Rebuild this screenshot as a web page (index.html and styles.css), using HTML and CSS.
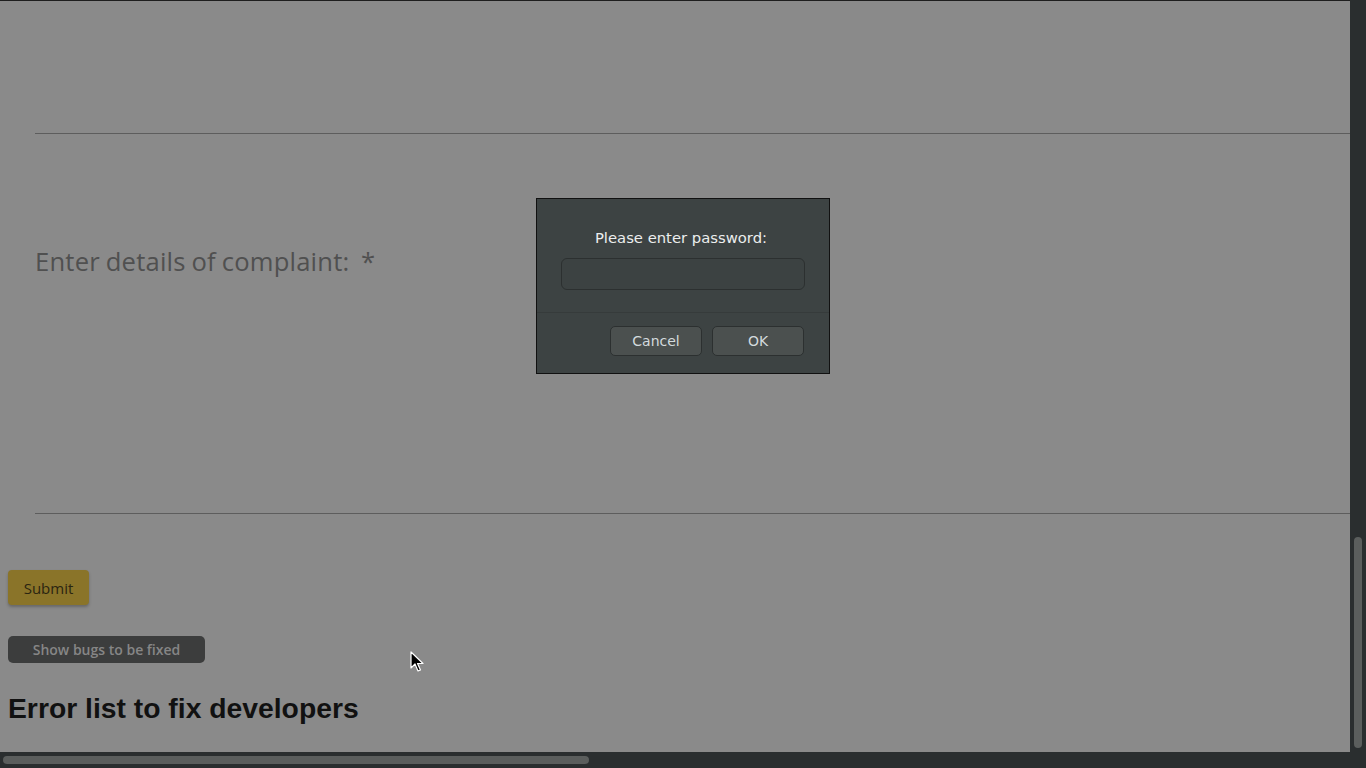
FILE: index.html
```html
<!DOCTYPE html>
<html lang="en">
<head>
<meta charset="utf-8">
<title>Complaint form</title>
<link rel="stylesheet" href="styles.css">
</head>
<body>
<div class="window">
  <div class="viewport">
    <main class="page">
      <div class="top-space"></div>
      <section class="field">
        <label class="field-label">Enter details of complaint:&nbsp; *</label>
      </section>
      <div class="actions">
        <button class="btn-submit" type="button">Submit</button>
        <button class="btn-bugs" type="button">Show bugs to be fixed</button>
      </div>
      <h2 class="errors-title">Error list to fix developers</h2>
    </main>
    <div class="vscroll"><div class="vthumb"></div></div>
  </div>
  <div class="hscroll">
    <div class="htrack"><div class="hthumb"></div></div>
    <div class="corner"></div>
  </div>

  <div class="dialog" role="dialog">
    <div class="dialog-body">
      <p class="dialog-msg">Please enter password:</p>
      <input class="dialog-input" type="password">
    </div>
    <div class="dialog-actions">
      <button class="dlg-btn" type="button">Cancel</button>
      <button class="dlg-btn" type="button">OK</button>
    </div>
  </div>

  <svg class="cursor" width="14" height="22" viewBox="0 0 14 22">
    <path d="M1 1 L1 17 L5 13 L8 20 L10.5 19 L7.5 12.5 L13 12.5 Z" fill="#000" stroke="#fff" stroke-width="1.2" stroke-linejoin="round"/>
  </svg>
</div>
</body>
</html>
```

FILE: styles.css
```css
* { box-sizing: border-box; }
html, body { margin: 0; padding: 0; height: 100%; overflow: hidden; }
body { background: #8a8a8a; font-family: "DejaVu Sans", "Open Sans", sans-serif; }

.window {
  position: relative;
  width: 1366px;
  height: 768px;
  display: flex;
  flex-direction: column;
}
.viewport {
  flex: 1;
  display: flex;
  min-height: 0;
}
.page {
  flex: 1;
  background: #8a8a8a;
  border-top: 1px solid #1e1e1e;
  overflow: hidden;
}
.top-space { height: 132px; }
.field {
  margin-left: 35px;
  height: 381px;
  border-top: 1px solid #5d5d5d;
  border-bottom: 1px solid #5d5d5d;
  padding-top: 110px;
}
.field-label {
  font-family: "Open Sans", "DejaVu Sans", sans-serif;
  font-size: 25.6px;
  color: #505050;
  letter-spacing: 0.2px;
  word-spacing: -1px;
}
.actions {
  padding: 56px 8px 0;
  display: flex;
  flex-direction: column;
  align-items: flex-start;
  gap: 31px;
}
.btn-submit {
  height: 35px;
  width: 81px;
  background: #8a7429;
  color: #2b2511;
  border: none;
  border-radius: 4px;
  box-shadow: 0 2px 3px rgba(0,0,0,0.25);
  font-family: "Open Sans", "DejaVu Sans", sans-serif;
  font-size: 15px;
  padding: 0;
}
.btn-bugs {
  height: 27px;
  width: 197px;
  background: #3c3d3d;
  color: #868686;
  border: none;
  border-radius: 5px;
  font-family: "Open Sans", "DejaVu Sans", sans-serif;
  font-weight: 600;
  font-size: 14px;
  padding: 0;
}
.errors-title {
  margin: 28px 8px 0;
  font-family: "Liberation Sans", Arial, sans-serif;
  font-weight: bold;
  font-size: 28.3px;
  line-height: 34px;
  color: #111;
}

.vscroll {
  width: 16px;
  background: #2a2e2f;
  display: flex;
  flex-direction: column;
  justify-content: flex-end;
  align-items: center;
  padding-bottom: 4px;
}
.vthumb {
  width: 8px;
  height: 211px;
  background: #5b5e5d;
  border-radius: 4px;
}
.hscroll {
  height: 16px;
  display: flex;
}
.htrack {
  flex: 1;
  background: #2a2e2f;
  padding: 4px 3px;
}
.hthumb {
  width: 586px;
  height: 8px;
  background: #5b5e5d;
  border-radius: 4px;
}
.corner { width: 16px; background: #2a2e2f; }

.dialog {
  position: absolute;
  left: 536px;
  top: 198px;
  width: 294px;
  height: 176px;
  background: #3d4343;
  border: 1px solid #111;
  display: flex;
  flex-direction: column;
}
.dialog-body {
  padding: 30px 24px 0 20px;
  display: flex;
  flex-direction: column;
  align-items: center;
  height: 114px;
  border-bottom: 1px solid #363b3b;
}
.dialog-msg {
  margin: 0;
  color: #eceeee;
  font-size: 14.8px;
  line-height: 18px;
}
.dialog-input {
  margin-top: 11px;
  margin-left: 4px;
  width: 244px;
  height: 32px;
  background: #3c4242;
  border: 1px solid #2c3030;
  border-radius: 6px;
  outline: none;
}
.dialog-actions {
  flex: 1;
  display: flex;
  justify-content: flex-end;
  align-items: flex-start;
  gap: 10px;
  padding: 13px 25px 0;
}
.dlg-btn {
  width: 92px;
  height: 30px;
  background: #4b504f;
  border: 1px solid #2c3030;
  border-radius: 5px;
  color: #d3dadd;
  font-family: "DejaVu Sans", sans-serif;
  font-size: 14px;
  padding: 0;
}

.cursor {
  position: absolute;
  left: 410px;
  top: 651px;
}
```
